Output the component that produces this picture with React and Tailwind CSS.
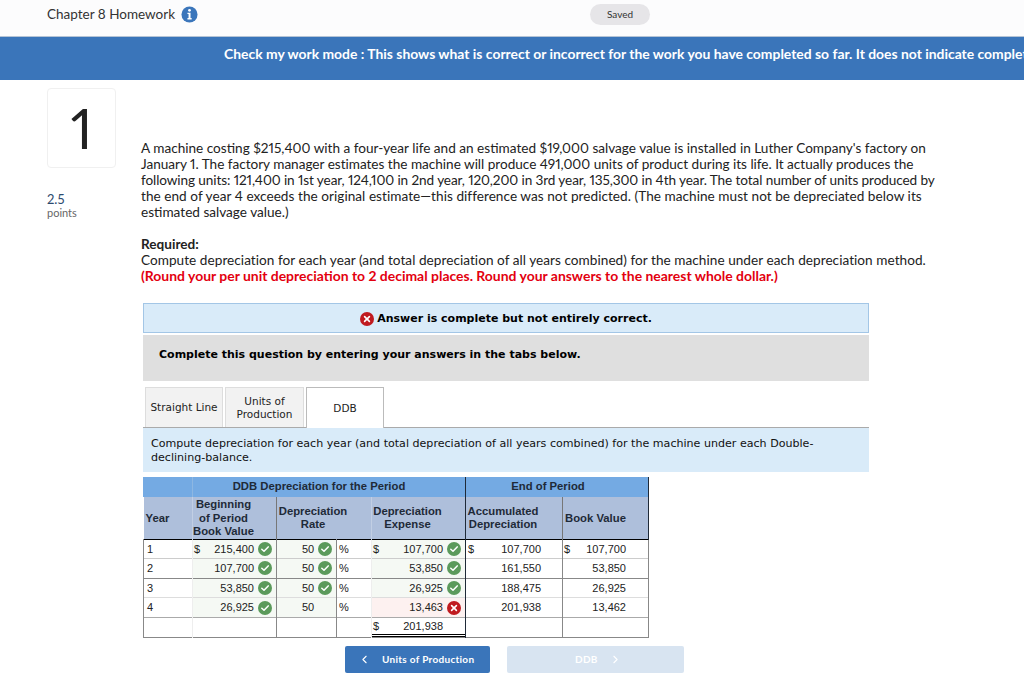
import React from 'react';
import { ChevronLeft, ChevronRight } from 'lucide-react';

const rows = [
  { year: '1', begin: '215,400', rate: '50', expense: '107,700', acc: '107,700', book: '107,700', dollar: true, line: 'border-[#ccc]' },
  { year: '2', begin: '107,700', rate: '50', expense: '53,850', acc: '161,550', book: '53,850', line: 'border-[#888]' },
  { year: '3', begin: '53,850', rate: '50', expense: '26,925', acc: '188,475', book: '26,925', line: 'border-[#ddd]' },
  { year: '4', begin: '26,925', rate: '50', rateOpen: true, expense: '13,463', wrong: true, acc: '201,938', book: '13,462', line: 'border-[#aaa]' },
];

function Check() {
  return (
    <svg viewBox="0 0 14 14" className="w-[14px] h-[14px] shrink-0">
      <circle cx="7" cy="7" r="7" fill="#5b9a5b" />
      <path d="M3.8 7.2 6 9.3l4.2-4.4" fill="none" stroke="#fff" strokeWidth="1.5" strokeLinecap="round" strokeLinejoin="round" />
    </svg>
  );
}

function Cross({ size = 'w-[14px] h-[14px]' }) {
  return (
    <svg viewBox="0 0 14 14" className={`${size} shrink-0`}>
      <circle cx="7" cy="7" r="7" fill="#c01a1f" />
      <path d="M4.6 4.6l4.8 4.8M9.4 4.6l-4.8 4.8" fill="none" stroke="#fff" strokeWidth="1.6" strokeLinecap="round" />
    </svg>
  );
}

function Info() {
  return (
    <svg viewBox="0 0 18 18" className="w-[17px] h-[17px]">
      <circle cx="9" cy="9" r="8.5" fill="#3b76bb" />
      <circle cx="9" cy="4.6" r="1.5" fill="#fff" />
      <path d="M6.8 7.2h3.3v5.6h1.2v1.4H6.8v-1.4H8V8.6H6.8z" fill="#fff" />
    </svg>
  );
}

export default function App() {
  return (
    <div className="w-[1024px] h-[700px] overflow-hidden bg-white text-[#222] font-['Lato',sans-serif] proportional-nums">
      <div className="h-[37px] bg-[#fcfcfd] border-b border-[#b5c4d6] flex items-center pl-[47px] pb-[8px]">
        <span className="text-[13.5px] text-[#333] w-[128px] whitespace-nowrap">Chapter 8 Homework</span>
        <span className="ml-[6px] flex"><Info /></span>
        <div className="ml-[392px] w-[60px] h-[21px] rounded-full bg-[#e6e5e8] flex items-center justify-center text-[10px] text-[#333]">Saved</div>
      </div>

      <div className="h-[43px] bg-[#3a75ba] pl-[224px] pt-[8px] overflow-hidden">
        <p className="whitespace-nowrap text-[13.9px] leading-[17px] font-bold text-white">Check my work mode : This shows what is correct or incorrect for the work you have completed so far. It does not indicate completion.</p>
      </div>

      <div className="flex">
        <div className="w-[141px] shrink-0 pl-[47px] pt-[8px]">
          <div className="w-[69px] h-[80px] border border-[#f0f0f0] rounded-[4px] flex items-center justify-center text-[56px] leading-none text-[#222]">1</div>
          <div className="mt-[23px] text-[13px] leading-[16px] text-[#2c4a6e]">2.5</div>
          <div className="mt-[-1px] text-[11px] leading-[13px] text-[#666]">points</div>
        </div>

        <div className="pt-[60px] w-[800px]">
          <p className="text-[13.6px] leading-[16px] whitespace-nowrap">
            A machine costing $215,400 with a four-year life and an estimated $19,000 salvage value is installed in Luther Company's factory on<br />
            <span className="tracking-[-0.02px]">January 1. The factory manager estimates the machine will produce 491,000 units of product during its life. It actually produces the</span><br />
            <span className="tracking-[-0.1px]">following units: 121,400 in 1st year, 124,100 in 2nd year, 120,200 in 3rd year, 135,300 in 4th year. The total number of units produced by</span><br />
            <span className="tracking-[0.04px]">the end of year 4 exceeds the original estimate—this difference was not predicted. (The machine must not be depreciated below its</span><br />
            estimated salvage value.)
          </p>
          <p className="mt-[16px] text-[13.6px] leading-[16px] whitespace-nowrap">
            <b>Required:</b><br />
            <span className="tracking-[0.04px]">Compute depreciation for each year (and total depreciation of all years combined) for the machine under each depreciation method.</span><br />
            <b className="text-[#e3000f] text-[13.95px]">(Round your per unit depreciation to 2 decimal places. Round your answers to the nearest whole dollar.)</b>
          </p>

          <div className="ml-[2px] mt-[19px] w-[726px] font-['DejaVu_Sans',sans-serif] text-[11px]">
            <div className="h-[30px] bg-[#d9ebf9] border border-[#a3c6e6] flex items-center justify-center gap-[3px] font-bold text-black pt-[2px]">
              <Cross />
              <span>Answer is complete but not entirely correct.</span>
            </div>
            <div className="mt-[2px] h-[46px] bg-[#dfdfdf] flex items-center pl-[16px] pb-[6px] font-bold text-black">Complete this question by entering your answers in the tabs below.</div>

            <div className="mt-[6px] flex gap-[2px] pl-[2px] h-[41px] text-[10.5px] leading-[13px] text-center text-[#222] border-b border-[#aaa]">
              <div className="w-[78px] bg-[#f2f2f2] border-x border-t border-[#ddd] flex items-center justify-center">Straight Line</div>
              <div className="w-[79px] bg-[#f2f2f2] border-x border-t border-[#ddd] flex items-center justify-center">Units of<br />Production</div>
              <div className="w-[78px] h-[41px] bg-white border-x border-t border-[#bbb] flex items-center justify-center">DDB</div>
            </div>
            <div className="h-[44px] bg-[#d9ebf9] pl-[8px] pt-[9px] text-[11.08px] leading-[14px] text-[#111]">
              Compute depreciation for each year (and total depreciation of all years combined) for the machine under each Double-<br />declining-balance.
            </div>

            <table className="mt-[5px] w-[505px] table-fixed border-collapse font-['Liberation_Sans',sans-serif] text-[11px] text-[#222]">
              <colgroup>
                <col className="w-[49px]" />
                <col className="w-[84px]" />
                <col className="w-[60px]" />
                <col className="w-[35px]" />
                <col className="w-[94px]" />
                <col className="w-[97px]" />
                <col className="w-[86px]" />
              </colgroup>
              <thead className="font-bold text-center text-[#1f2a38] text-[11.3px]">
                <tr className="h-[20px] bg-[#74aae3]">
                  <th className="border-l border-[#74aae3]" />
                  <th colSpan={4} className="border-l border-[#8db7e2] border-r-[#1f2a38] border-r pr-[20px] pb-[1px]">DDB Depreciation for the Period</th>
                  <th colSpan={2} className="border-r border-[#1f2a38] pr-[18px] pb-[1px]">End of Period</th>
                </tr>
                <tr className="h-[42px] bg-[#aebfdb] leading-[13.5px] border-b border-black">
                  <th className="text-left pl-[2px] pt-[1px]">Year</th>
                  <th className="border-l border-[#c2cfe4] pr-[22px] pt-[1px]">Beginning<br />of Period<br />Book Value</th>
                  <th colSpan={2} className="border-l border-[#777] pr-[22px] pt-[1px]">Depreciation<br />Rate</th>
                  <th className="border-l border-[#c2cfe4] border-r border-r-[#1f2a38] pr-[22px] pt-[1px]">Depreciation<br />Expense</th>
                  <th className="border-r border-[#777] pr-[22px] pt-[1px] whitespace-nowrap">Accumulated<br />Depreciation</th>
                  <th className="border-r border-[#1f2a38] pr-[20px] pt-[1px] whitespace-nowrap">Book Value</th>
                </tr>
              </thead>
              <tbody>
                {rows.map(r => (
                  <tr key={r.year} className={`h-[19.6px] border-b ${r.line}`}>
                    <td className="border-l border-[#888] pl-[3px]">{r.year}</td>
                    <td className="border-l border-[#eee] bg-[#f5f9f4] p-0">
                      <div className="flex items-center justify-end gap-[4px] pr-[4px] relative">
                        {r.dollar && <span className="absolute left-[1px]">$</span>}
                        {r.begin}<Check />
                      </div>
                    </td>
                    <td className="border-l border-[#888] bg-[#f5f9f4] p-0">
                      <div className="flex items-center gap-[4px] pl-[25px]">{r.rate}{!r.rateOpen && <Check />}</div>
                    </td>
                    <td className="border-l border-[#888] pl-[2px]">%</td>
                    <td className={`border-l border-[#eee] p-0 ${r.wrong ? 'bg-[#fdf1f0]' : 'bg-[#f5f9f4]'}`}>
                      <div className="flex items-center justify-end gap-[4px] pr-[4px] relative">
                        {r.dollar && <span className="absolute left-[1px]">$</span>}
                        {r.expense}{r.wrong ? <Cross /> : <Check />}
                      </div>
                    </td>
                    <td className="border-l border-[#1f2a38] p-0">
                      <div className="flex justify-end pr-[21px] relative">
                        {r.dollar && <span className="absolute left-[2px]">$</span>}
                        {r.acc}
                      </div>
                    </td>
                    <td className="border-l border-[#888] border-r p-0">
                      <div className="flex justify-end pr-[22px] relative">
                        {r.dollar && <span className="absolute left-[1px]">$</span>}
                        {r.book}
                      </div>
                    </td>
                  </tr>
                ))}
                <tr className="h-[20px] border-b border-[#888]">
                  <td className="border-l border-[#888]" />
                  <td className="border-l border-[#eee]" />
                  <td className="border-l border-[#888]" />
                  <td className="border-l border-[#888]" />
                  <td className="border-l border-[#eee] p-0">
                    <div className="flex justify-end pr-[22px] relative h-[19px] items-center border-b-[3px] border-double border-black">
                      <span className="absolute left-[1px]">$</span>201,938
                    </div>
                  </td>
                  <td className="border-l border-[#1f2a38]" />
                  <td className="border-l border-[#888] border-r" />
                </tr>
              </tbody>
            </table>

            <div className="mt-[8px] flex gap-[17px] pl-[202px] font-['Lato',sans-serif] font-bold text-[10px] text-white">
              <div className="w-[145px] h-[27px] bg-[#3a75ba] rounded-[2px] flex items-center pl-[13px]">
                <ChevronLeft size={13} strokeWidth={2} />
                <span className="ml-[11px] tracking-[0.3px]">Units of Production</span>
              </div>
              <div className="w-[177px] h-[27px] bg-[#d8e4f1] rounded-[2px] flex items-center pl-[68px]">
                <span className="tracking-[0.3px]">DDB</span>
                <ChevronRight size={13} strokeWidth={2} className="ml-[11px]" />
              </div>
            </div>
          </div>
        </div>
      </div>
    </div>
  );
}
